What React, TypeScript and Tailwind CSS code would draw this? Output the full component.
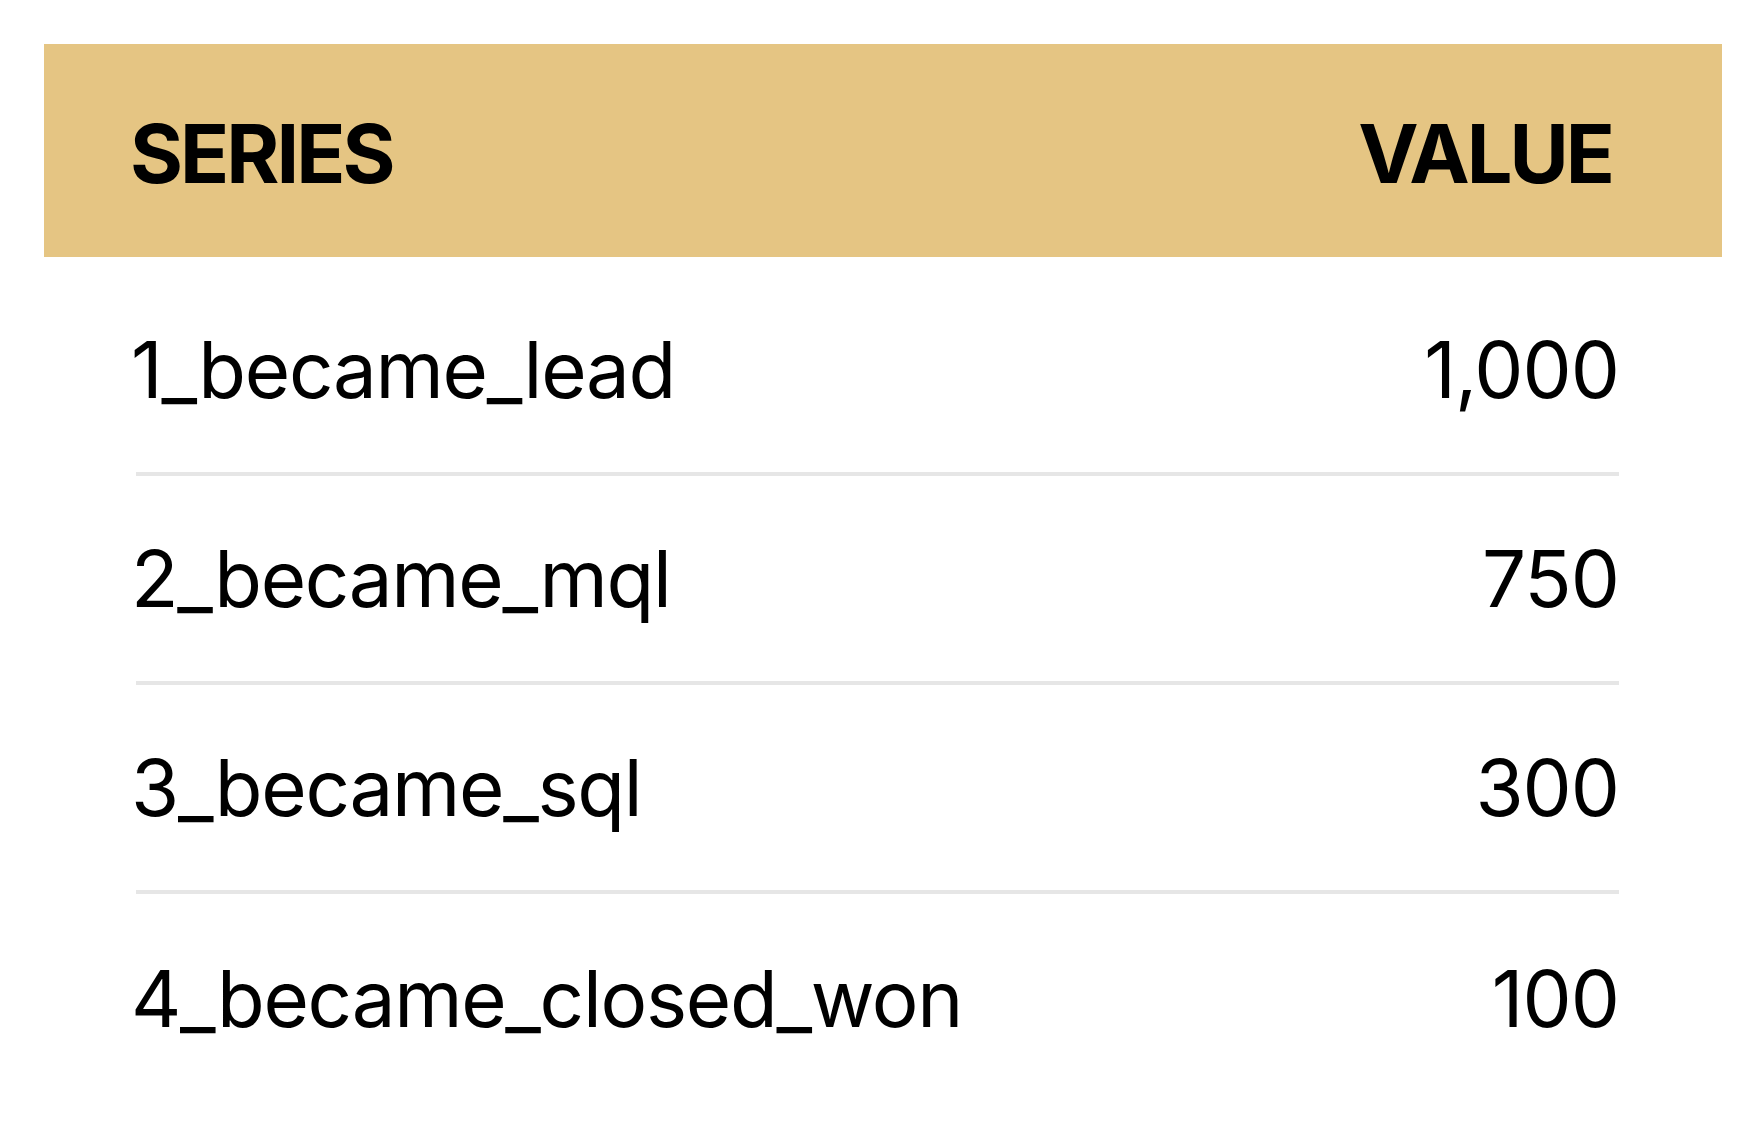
const rows = [
  { series: "1_became_lead", value: "1,000" },
  { series: "2_became_mql", value: "750" },
  { series: "3_became_sql", value: "300" },
  { series: "4_became_closed_won", value: "100" },
];

export default function App() {
  return (
    <div className="min-h-screen bg-white pt-[44px] pl-[44px]" style={{ fontFamily: "Inter, 'Noto Sans', sans-serif" }}>
      <div className="w-[1678px]">
        <div className="flex h-[213px] items-center justify-between bg-[#e5c583] pl-[86px] pr-[110px] pt-[8px]">
          <span className="text-[81px] font-bold leading-none tracking-[-3px] text-black">SERIES</span>
          <span className="text-[81px] font-bold leading-none tracking-[-3px] text-black">VALUE</span>
        </div>

        <div className="mt-[10px] ml-[92px] mr-[103px]">
          {rows.map((row, i) => (
            <div
              key={row.series}
              className={`flex h-[209px] items-center justify-between ${
                i < rows.length - 1 ? "border-b-4 border-[#e6e6e6]" : ""
              }`}
            >
              <span className="-ml-[5px] text-[78px] font-normal leading-none tracking-[-1.3px] text-black">{row.series}</span>
              <span className="text-[78px] font-normal leading-none tracking-[-1px] text-black">{row.value}</span>
            </div>
          ))}
        </div>
      </div>
    </div>
  );
}
